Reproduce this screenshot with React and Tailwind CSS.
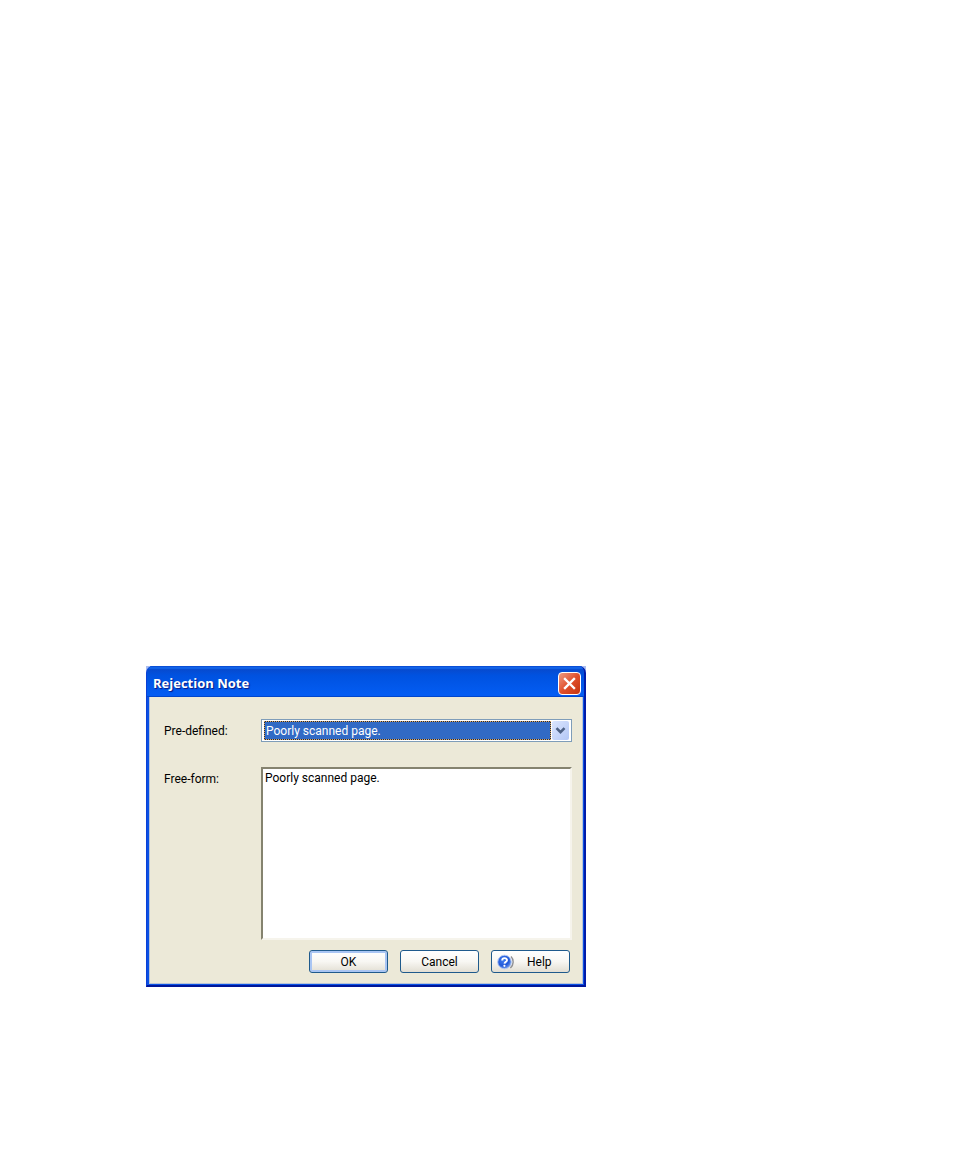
import { useState } from "react";

const NOTES = ["Poorly scanned page.", "Missing page.", "Wrong document type."];

// Shared look of the footer buttons
const buttonBase =
  "flex h-[23px] w-[79px] items-center rounded-[3px] border border-[#1f5a8c] bg-linear-to-b from-white via-[#f8f7f3] to-[#e2ded3]";

const CloseIcon = () => (
  <svg viewBox="0 0 19 19" className="size-[19px]" fill="none" stroke="#fff" strokeWidth="2.4" strokeLinecap="square">
    <path d="M5 5 L14 14 M14 5 L5 14" />
  </svg>
);

const ArrowIcon = () => (
  <svg viewBox="0 0 17 17" className="size-[17px]" fill="none" stroke="#4d6185" strokeWidth="2.6">
    <path d="M4.5 6.2 L8.5 10.2 L12.5 6.2" />
  </svg>
);

const HelpIcon = () => (
  <svg viewBox="0 0 18 16" className="h-4 w-[18px]">
    <defs>
      <radialGradient id="helpBall" cx="0.4" cy="0.35" r="0.65">
        <stop offset="0" stopColor="#3f7df0" />
        <stop offset="0.65" stopColor="#2259d8" />
        <stop offset="1" stopColor="#6f98e8" />
      </radialGradient>
    </defs>
    <path d="M14 2.6 C17 5.6 17 10.6 13.4 14" fill="none" stroke="#8f9095" strokeWidth="1.4" />
    <circle cx="7.5" cy="8" r="6.8" fill="url(#helpBall)" stroke="#b4c9f2" strokeWidth="1" />
    <path d="M5.2 6.4 C5.2 3.4 10.1 3.4 10 6.2 C9.9 7.9 7.6 7.8 7.5 9.6" fill="none" stroke="#fff" strokeWidth="1.9" />
    <circle cx="7.4" cy="11.8" r="1.1" fill="#fff" />
  </svg>
);

const RejectionNoteDialog = () => {

  const [predefined, setPredefined] = useState(NOTES[0]); // Selected note
  const [note, setNote] = useState(NOTES[0]); // Free-form text

  // Picking a note also fills in the free-form box
  const handleSelect = (e) => {
    setPredefined(e.target.value);
    setNote(e.target.value);
  };

  return (
    <section
      aria-labelledby="dialog-title"
      className="w-full max-w-[440px] bg-[#a9bdf0] text-xs text-black"
    >
      <div className="overflow-hidden rounded-t-[7px] border-r-2 border-b-2 border-l border-r-[#001ba8] border-b-[#001699] border-l-[#0a3fd6] bg-[#0a50e4]">

        {/* Title Bar */}
        <header className="flex h-[31px] items-center justify-between bg-linear-to-b from-[#0a45c4] from-0% via-[#0052e0] via-30% to-[#035cf2] to-90% pr-[3px] pl-1.5 shadow-[inset_0_1px_0_#0a4fd6,inset_0_3px_1px_#1263e8,inset_0_-1px_0_#0046cc]">
          <h1
            id="dialog-title"
            className="pt-1 font-['Open_Sans',sans-serif] text-[13px] font-bold text-white [text-shadow:1px_1px_1px_#0a1883]"
          >
            Rejection Note
          </h1>
          <button
            type="button"
            aria-label="Close"
            className="mt-1 flex size-[23px] items-center justify-center rounded-[4px] border border-white bg-linear-to-br from-[#ee9a80] via-[#e0502c] to-[#c4330d]"
          >
            <CloseIcon />
          </button>
        </header>

        {/* Form */}
        <form
          className="mr-px mb-px ml-[2px] bg-[#ece9d8] pt-[22px] pr-[11px] pb-[11px] pl-[15px] shadow-[inset_1px_0_0_#b9c4d6,inset_-1px_-1px_0_#b9c4d6]"
          onSubmit={(e) => e.preventDefault()}
        >
          <div className="flex">
            <label htmlFor="predefined" className="w-[97px] shrink-0 pt-1 leading-4">
              Pre-defined:
            </label>
            <div className="flex h-[23px] flex-1 items-center border border-[#7f9db9] bg-white px-[2px]">
              <div className="flex-1 bg-[#1c2b4c]">
                <select
                  id="predefined"
                  value={predefined}
                  onChange={handleSelect}
                  className="block h-[19px] w-full appearance-none border border-dotted border-[#e0a95c] bg-[#316ac5] bg-clip-padding pl-px leading-4 text-white outline-none"
                >
                  {NOTES.map((item) => (
                    <option key={item}>{item}</option>
                  ))}
                </select>
              </div>
              <span className="ml-px flex h-[19px] w-[17px] items-center justify-center rounded-[2px] bg-linear-to-br from-[#dbe5fe] to-[#b3c7f5]">
                <ArrowIcon />
              </span>
            </div>
          </div>

          <div className="mt-[25px] flex">
            <label htmlFor="freeform" className="w-[97px] shrink-0 pt-1 leading-4">
              Free-form:
            </label>
            <textarea
              id="freeform"
              value={note}
              onChange={(e) => setNote(e.target.value)}
              className="h-[173px] min-w-0 flex-1 resize-none border-2 border-t-[#85836f] border-r-[#f6f4ec] border-b-[#f6f4ec] border-l-[#85836f] bg-white px-[2px] pt-px leading-4 outline-none"
            />
          </div>

          {/* Buttons */}
          <div className="mt-[10px] flex justify-end gap-3 pr-[2px]">
            <button type="submit" className={`${buttonBase} justify-center shadow-[inset_0_0_0_2px_#a9c5f3]`}>
              OK
            </button>
            <button type="button" className={`${buttonBase} justify-center`}>
              Cancel
            </button>
            <button type="button" className={`${buttonBase} gap-3 pl-[5px]`}>
              <HelpIcon />
              Help
            </button>
          </div>
        </form>

      </div>
    </section>
  );
};

const App = () => {
  return (
    <main className="min-h-screen bg-white px-[146px] pt-[666px] pb-16 font-[Roboto,'Liberation_Sans',sans-serif]">
      <RejectionNoteDialog />
    </main>
  );
};

export default App;
